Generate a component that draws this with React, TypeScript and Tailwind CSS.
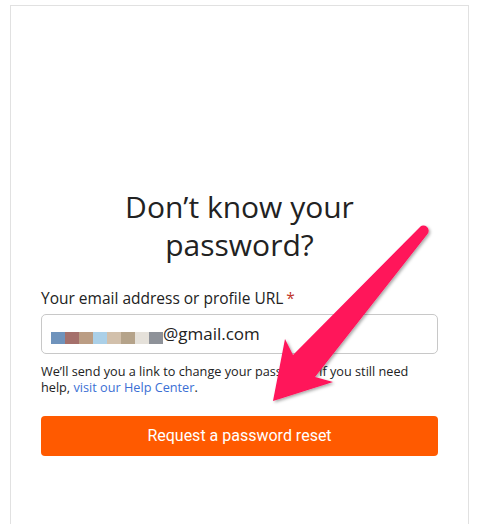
export default function App() {
  const blocks = ["#6f93bc", "#a5706b", "#bb9d84", "#abd0e8", "#d2c0ab", "#b5a38a", "#e5e1da", "#8e9299"];

  return (
    <div className="relative min-h-[524px] bg-white px-[10px] pt-[5px]" style={{ fontFamily: '"Open Sans", sans-serif' }}>
      <div className="h-[519px] border border-b-0 border-[#e1e1e1] px-[30px] pt-[182px]">
        <h1 className="mx-auto w-[280px] text-center text-[30px] font-medium leading-[38px] text-[#222222]">
          Don&rsquo;t know your password?
        </h1>

        <label className="mt-[24px] block text-[15.5px] leading-[20px] text-[#222222]">
          Your email address or profile URL<span className="ml-[3px] text-[#c0392b]">*</span>
        </label>

        <div className="mt-[6px] flex h-[40px] items-center rounded-[5px] border border-[#c8c8c8] pl-[9px]">
          <div className="mt-[8px] flex">
            {blocks.map((c) => (
              <span key={c} className="block h-[12px] w-[14px]" style={{ backgroundColor: c }} />
            ))}
          </div>
          <span className="text-[17px] leading-[20px] text-[#222222]">@gmail.com</span>
        </div>

        <p className="mt-[9px] max-w-[380px] text-[12.7px] leading-[16px] text-[#222222]">
          We&rsquo;ll send you a link to change your password. If you still need help,{" "}
          <a className="text-[#3b6fd4]">visit our Help Center</a>.
        </p>

        <button className="mt-[21px] flex h-[40px] w-full items-center justify-center rounded-[4px] bg-[#ff5a00] text-[16px] text-white" style={{ fontFamily: "Roboto, sans-serif" }}>
          Request a password reset
        </button>
      </div>

      <svg className="pointer-events-none absolute left-0 top-0" width="479" height="524" viewBox="0 0 479 524">
        <defs>
          <filter id="sh" x="-20%" y="-20%" width="140%" height="140%">
            <feDropShadow dx="1.5" dy="1.5" stdDeviation="1.5" floodColor="#000" floodOpacity="0.35" />
          </filter>
        </defs>
        <path
          d="M 293 355 L 419.5 227.5 A 5 5 0 0 1 427.5 234 L 315 377 L 333 382 L 273 401 L 285 339 Z"
          fill="#ff125a"
          filter="url(#sh)"
        />
      </svg>
    </div>
  );
}
